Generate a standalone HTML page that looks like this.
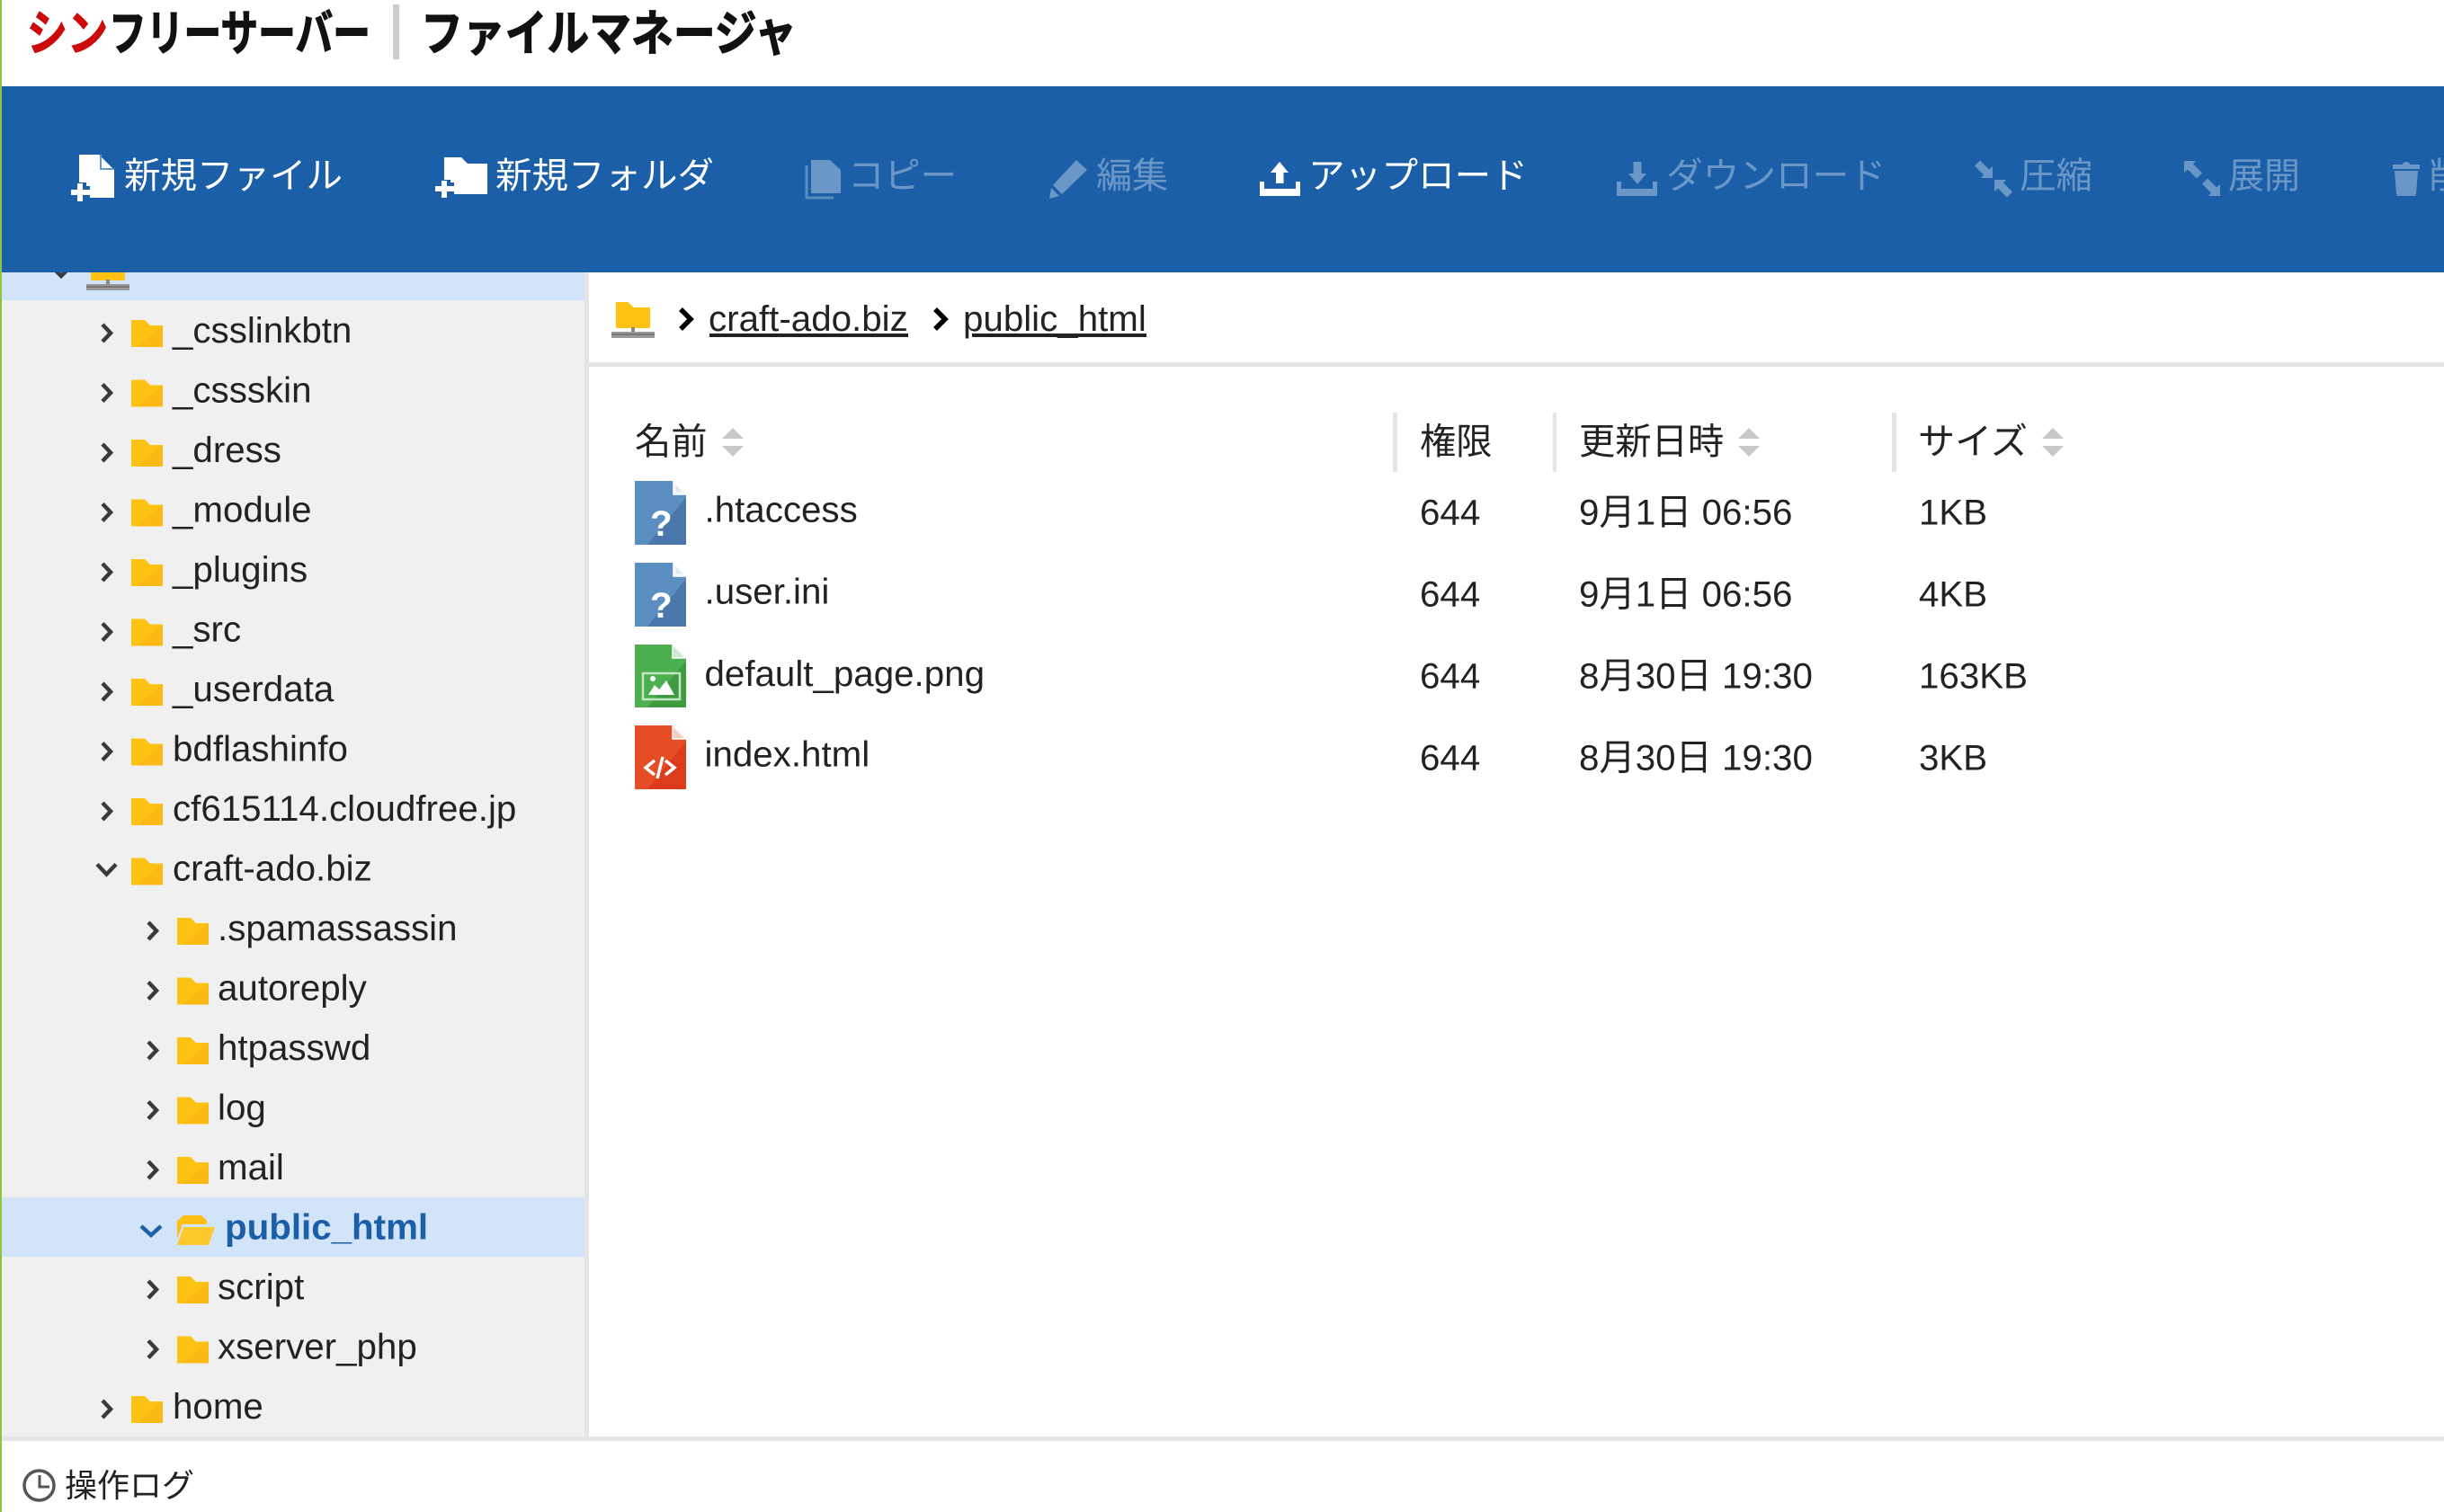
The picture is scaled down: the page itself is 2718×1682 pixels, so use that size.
<!DOCTYPE html>
<html lang="ja"><head><meta charset="utf-8"><title>ファイルマネージャ</title>
<style>
html,body{margin:0;padding:0;background:#fff;width:2718px;height:1682px;overflow:hidden}
svg{display:block}
text{font-family:"Liberation Sans","Noto Sans CJK JP",sans-serif;font-size:40.3px;fill:#222}
.t text{fill:#fff;font-weight:400;font-family:"Noto Sans CJK JP","Liberation Sans",sans-serif;font-size:40px}
.d{opacity:.35}
.lg{font-family:"Noto Sans CJK JP",sans-serif;font-weight:700;font-size:54px;fill:#111;stroke:#111;stroke-width:1.2px}
.c{fill:none;stroke:#3a3a3a;stroke-width:4.5}
.h{font-weight:400}
</style></head><body>
<svg width="2718" height="1682" viewBox="0 0 2718 1682" xmlns="http://www.w3.org/2000/svg">
<defs>
<g id="fo"><path d="M0 0H15L21 6H35V30H0Z" fill="#fec212"/><path d="M35 6V30H6Z" fill="#fdb913"/></g>
<polyline id="cr" class="c" points="114,361 123,370.5 114,380"/>
<polyline id="cr2" class="c" points="165,361 174,370.5 165,380"/>
<g id="net"><path d="M5 0H18L25 6H43V29H5Z" fill="#fec212"/><rect x="22" y="28" width="4" height="12" fill="#888"/><rect x="0" y="33" width="48" height="7" fill="#999"/><rect x="0" y="35" width="48" height="2" fill="#777"/></g>
<g id="sort"><path d="M12 476L24 488H0Z M0 496H24L12 508Z" fill="#c8c8c8"/></g>
<g id="qf"><path d="M0 0H42L57 15V71H0Z" fill="#5b8fc2"/><path d="M57 18V71H14Z" fill="#4a78ad"/><path d="M43 0V15H57Z" fill="#dfe9f3" stroke="#fff" stroke-width="1.5"/><path d="M45 2V13H56" fill="none" stroke="#fff" stroke-width="1"/></g>
<g id="arrow"><path d="M0 0H13L10 3.500L20 13.500L14 19.500L4 9.500L0 13Z"/></g>
<g id="tray"><path d="M0 0H5V8H40V0H45V16H0Z"/></g>
</defs>

<rect width="2718" height="1682" fill="#fff"/>
<rect x="2" y="303" width="648" height="1295" fill="#f0f0f0"/>
<rect x="650" y="303" width="5" height="1295" fill="#e5e5e5"/>
<rect x="2" y="1598" width="2716" height="5" fill="#e5e5e5"/>
<rect x="655" y="403" width="2063" height="5" fill="#e5e5e5"/>
<rect x="2" y="296" width="648" height="38" fill="#d2e4f9"/>
<rect x="2" y="1332" width="648" height="66" fill="#d2e4f9"/>
<polyline class="c" points="58,297 68,307 78,297"/>
<use href="#net" x="96" y="283"/>

<!-- header -->
<rect x="2" y="96" width="2716" height="207" fill="#1b5fa8"/>
<rect x="0" y="0" width="2" height="1682" fill="#8cc63f"/>
<text class="lg" x="30" y="56" textLength="90" lengthAdjust="spacingAndGlyphs" style="fill:#cc0a0a;stroke:#cc0a0a">シン</text>
<text class="lg" x="121" y="56" textLength="291" lengthAdjust="spacingAndGlyphs">フリーサーバー</text>
<rect x="437" y="5" width="7" height="61" fill="#ccc"/>
<text class="lg" x="468" y="56" textLength="418" lengthAdjust="spacingAndGlyphs">ファイルマネージャ</text>

<!-- toolbar -->
<g class="t">
<path d="M88 172H110L127 189V220H88Z" fill="#fff"/>
<path d="M112 172V188H127" fill="none" stroke="#6a96c8" stroke-width="2"/>
<path d="M89 203V224M78 214H100" stroke="#1b5fa8" stroke-width="14" fill="none"/>
<path d="M89 204V224M79 214H100" stroke="#fff" stroke-width="6" fill="none"/>
<text x="138" y="209" textLength="243" lengthAdjust="spacingAndGlyphs">新規ファイル</text>

<path d="M494 175H513L520 182H542V216H494Z" fill="#fff"/>
<path d="M494 200V220M483 210H505" stroke="#1b5fa8" stroke-width="14" fill="none"/>
<path d="M494 201V220M484 210H505" stroke="#fff" stroke-width="6" fill="none"/>
<text x="551" y="209" textLength="243" lengthAdjust="spacingAndGlyphs">新規フォルダ</text>

<g class="d">
<path d="M902 178H923L935 189V215H902Z" fill="#fff"/>
<path d="M897 184V220H927" fill="none" stroke="#fff" stroke-width="3" opacity=".8"/>
<text x="943" y="209" textLength="121" lengthAdjust="spacingAndGlyphs">コピー</text>
<path d="M1197 178L1209 189L1181 216L1171 206Z M1169 209L1178 218L1167 221Z" fill="#fff"/>
<text x="1219" y="209">編集</text>
</g>

<path d="M1423 180L1433 192H1427.5V204H1419V192H1413Z" fill="#fff"/>
<use href="#tray" x="1401" y="202" fill="#fff"/>
<text x="1455" y="209" textLength="244" lengthAdjust="spacingAndGlyphs">アップロード</text>

<g class="d" fill="#fff">
<path d="M1821 205L1831 193H1825.5V180H1816.500V193H1811Z"/>
<use href="#tray" x="1798" y="202"/>
<text x="1853" y="209" textLength="244" lengthAdjust="spacingAndGlyphs">ダウンロード</text>
<g transform="translate(2216,198) rotate(180)"><use href="#arrow"/></g>
<use href="#arrow" x="2218" y="200"/>
<text x="2246" y="209" textLength="81" lengthAdjust="spacingAndGlyphs">圧縮</text>
<use href="#arrow" x="2429" y="179"/>
<g transform="translate(2469,218) rotate(180)"><use href="#arrow"/></g>
<text x="2478" y="209">展開</text>
<path d="M2661 183H2671Q2676 177 2681 183H2691V188H2661Z M2663 190H2689L2687 215Q2687 218 2684 218H2668Q2665 218 2665 215Z"/>
<text x="2701" y="209">削除</text>
</g>
</g>

<!-- tree -->
<g>
<use href="#cr"/><use href="#fo" x="146" y="356"/><text x="192" y="381">_csslinkbtn</text>
<g transform="translate(0,66.5)"><use href="#cr"/><use href="#fo" x="146" y="356"/><text x="192" y="381">_cssskin</text></g>
<g transform="translate(0,133)"><use href="#cr"/><use href="#fo" x="146" y="356"/><text x="192" y="381">_dress</text></g>
<g transform="translate(0,199.5)"><use href="#cr"/><use href="#fo" x="146" y="356"/><text x="192" y="381">_module</text></g>
<g transform="translate(0,266)"><use href="#cr"/><use href="#fo" x="146" y="356"/><text x="192" y="381">_plugins</text></g>
<g transform="translate(0,332.5)"><use href="#cr"/><use href="#fo" x="146" y="356"/><text x="192" y="381">_src</text></g>
<g transform="translate(0,399)"><use href="#cr"/><use href="#fo" x="146" y="356"/><text x="192" y="381">_userdata</text></g>
<g transform="translate(0,465.5)"><use href="#cr"/><use href="#fo" x="146" y="356"/><text x="192" y="381">bdflashinfo</text></g>
<g transform="translate(0,532)"><use href="#cr"/><use href="#fo" x="146" y="356"/><text x="192" y="381">cf615114.cloudfree.jp</text></g>
<g transform="translate(0,598.5)"><polyline class="c" points="108,363 118.500,374 129,363"/><use href="#fo" x="146" y="356"/><text x="192" y="381">craft-ado.biz</text></g>
<g transform="translate(0,665)"><use href="#cr2"/><use href="#fo" x="197" y="356"/><text x="242" y="381">.spamassassin</text></g>
<g transform="translate(0,731.5)"><use href="#cr2"/><use href="#fo" x="197" y="356"/><text x="242" y="381">autoreply</text></g>
<g transform="translate(0,798)"><use href="#cr2"/><use href="#fo" x="197" y="356"/><text x="242" y="381">htpasswd</text></g>
<g transform="translate(0,864.5)"><use href="#cr2"/><use href="#fo" x="197" y="356"/><text x="242" y="381">log</text></g>
<g transform="translate(0,931)"><use href="#cr2"/><use href="#fo" x="197" y="356"/><text x="242" y="381">mail</text></g>
<polyline fill="none" stroke="#1b5fa8" stroke-width="4.5" points="157,1364 168,1374 179,1364"/>
<path d="M197 1358L204 1352H224L230 1358V1362H203L197 1378Z" fill="#fdbf13"/>
<path d="M204 1365H239L232 1385H197Z" fill="#fec92d"/>
<text x="250" y="1378.500" style="font-weight:700;fill:#1b5fa8">public_html</text>
<g transform="translate(0,1064)"><use href="#cr2"/><use href="#fo" x="197" y="356"/><text x="242" y="381">script</text></g>
<g transform="translate(0,1130.5)"><use href="#cr2"/><use href="#fo" x="197" y="356"/><text x="242" y="381">xserver_php</text></g>
<g transform="translate(0,1197)"><use href="#cr"/><use href="#fo" x="146" y="356"/><text x="192" y="381">home</text></g>
</g>

<!-- breadcrumb -->
<use href="#net" x="680" y="336"/>
<polyline fill="none" stroke="#000" stroke-width="5.5" points="757,344 768,355 757,366"/>
<text x="788" y="368">craft-ado.biz</text>
<rect x="789" y="371" width="221" height="4" fill="#222"/>
<polyline fill="none" stroke="#000" stroke-width="5.5" points="1040,344 1051,355 1040,366"/>
<text x="1071" y="368">public_html</text>
<rect x="1081" y="371" width="194" height="4" fill="#222"/>

<!-- table header -->
<text class="h" x="706" y="505">名前</text><use href="#sort" x="803"/>
<rect x="1549" y="459" width="5" height="66" fill="#e5e5e5"/>
<text class="h" x="1579" y="505">権限</text>
<rect x="1727" y="459" width="4" height="66" fill="#e5e5e5"/>
<text class="h" x="1756" y="505">更新日時</text><use href="#sort" x="1933"/>
<rect x="2104" y="459" width="5" height="66" fill="#e5e5e5"/>
<text class="h" x="2133" y="505" textLength="122" lengthAdjust="spacingAndGlyphs">サイズ</text><use href="#sort" x="2271"/>

<!-- rows -->
<use href="#qf" x="706" y="535"/><text x="723" y="596" style="font-weight:700;fill:#fff">?</text>
<text x="783.500" y="580.500">.htaccess</text><text x="1579" y="583.500">644</text><text class="h" x="1756" y="583.500">9月1日 06:56</text><text x="2134" y="583.500">1KB</text>
<use href="#qf" x="706" y="626"/><text x="723" y="687" style="font-weight:700;fill:#fff">?</text>
<text x="783.500" y="671.500">.user.ini</text><text x="1579" y="674.500">644</text><text class="h" x="1756" y="674.500">9月1日 06:56</text><text x="2134" y="674.500">4KB</text>

<path d="M706 717H748L763 732V787H706Z" fill="#4caf50"/><path d="M763 735V787H720Z" fill="#3d9b40"/>
<path d="M748 717V732H763Z" fill="#cfe8d0" stroke="#fff" stroke-width="1.5"/>
<rect x="715" y="749" width="41" height="29" fill="none" stroke="#c5e4c6" stroke-width="2.5"/>
<path d="M721 773L728 762L733 767L741 757L750 773Z" fill="#fff"/><circle cx="726" cy="755" r="3" fill="#fff"/>
<text x="783.500" y="763">default_page.png</text><text x="1579" y="765.500">644</text><text class="h" x="1756" y="765.500">8月30日 19:30</text><text x="2134" y="765.500">163KB</text>

<path d="M706 807H748L763 822V878H706Z" fill="#e44d26"/><path d="M763 825V878H720Z" fill="#dc3b1c"/>
<path d="M748 807V822H763Z" fill="#f6cfc3" stroke="#fff" stroke-width="1.500"/>
<path d="M728 846L718 854L728 862M740 846L750 854L740 862M737 842L731 866" fill="none" stroke="#fff" stroke-width="3.5"/>
<text x="783.500" y="852.500">index.html</text><text x="1579" y="856.500">644</text><text class="h" x="1756" y="856.500">8月30日 19:30</text><text x="2134" y="856.500">3KB</text>

<!-- footer -->
<circle cx="43.500" cy="1652.500" r="16.500" fill="none" stroke="#555" stroke-width="3.5"/>
<path d="M44 1641V1654H55" fill="none" stroke="#555" stroke-width="3"/>
<text x="72" y="1665" style="font-size:36px;font-weight:400">操作ログ</text>
</svg>
</body></html>
